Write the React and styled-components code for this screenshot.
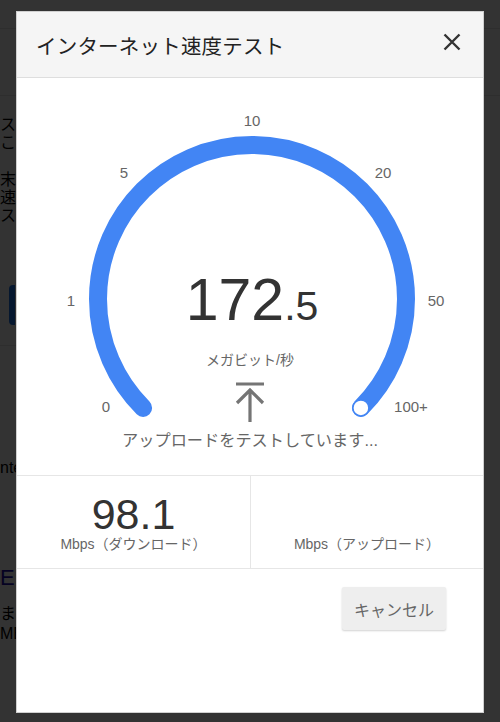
import React from 'react'
import styled, { createGlobalStyle } from 'styled-components'

const GlobalStyle = createGlobalStyle`
  html, body {
    margin: 0;
    padding: 0;
    background: #fff;
    font-family: "Liberation Sans", "Noto Sans CJK JP", Arial, sans-serif;
  }
`

const BLUE = '#4285f4'

// page behind the dialog (only a thin strip shows through)
const Page = styled.div`
  width: 500px;
  height: 722px;
  overflow: hidden;
  color: #000;
  font-size: 16px;
`

const TopBar = styled.div`
  height: 28px;
  border-bottom: 1px solid #e6e6e6;
`

const SubBar = styled.div`
  height: 66px;
  border-bottom: 1px solid #e6e6e6;
`

const Para = styled.p`
  margin: ${p => p.$top || 0}px 0 0 0;
  line-height: 18px;
  white-space: nowrap;
`

const PageButton = styled.div`
  margin: 60px 0 0 9px;
  width: 6px;
  height: 40px;
  border-radius: 4px 0 0 4px;
  background: #1a73e8;
`

const PageDivider = styled.div`
  margin-top: 20px;
  width: 16px;
  border-bottom: 1px solid #e6e6e6;
`

const PageLink = styled.div`
  margin-top: ${p => p.$top}px;
  font-size: 22px;
  color: #1a0dab;
  white-space: nowrap;
`

const Overlay = styled.div`
  position: fixed;
  inset: 0;
  background: rgba(0, 0, 0, 0.8);
  display: flex;
  justify-content: center;
  align-items: flex-start;
  padding-top: 11px;
  box-sizing: border-box;
`

const Dialog = styled.div`
  width: 468px;
  height: 702px;
  box-sizing: border-box;
  background: #fff;
  border: 1px solid #d0d0d0;
  display: flex;
  flex-direction: column;
`

const Header = styled.div`
  height: 66px;
  flex: none;
  box-sizing: border-box;
  display: flex;
  align-items: center;
  justify-content: space-between;
  padding: 0 20px 0 19px;
  background: #f5f5f5;
  border-bottom: 1px solid #dedede;
`

const Title = styled.h1`
  margin: 0;
  font-size: 20.5px;
  font-weight: 400;
  color: #222;
  letter-spacing: 0.2px;
`

const CloseButton = styled.button`
  border: 0;
  background: none;
  padding: 0;
  width: 22px;
  height: 22px;
  display: flex;
  align-items: center;
  justify-content: center;
  margin-top: -6px;
`

const Gauge = styled.div`
  position: relative;
  height: 397px;
  flex: none;
  border-bottom: 1px solid #e6e6e6;
  svg.dial {
    display: block;
  }
`

const Tick = styled.text`
  font-family: "Liberation Sans", Arial, sans-serif;
  font-size: 15px;
  fill: #666;
`

const Readout = styled.div`
  position: absolute;
  left: 0;
  right: 0;
  top: 193px;
  display: flex;
  flex-direction: column;
  align-items: center;
  color: #666;
`

const Speed = styled.div`
  font-size: 59px;
  line-height: 59px;
  color: #333;
  margin-left: 4px;
  span {
    font-size: 41px;
    line-height: 1;
  }
`

const Unit = styled.div`
  margin-top: 22px;
  font-size: 14px;
  line-height: 16px;
`

const Arrow = styled.svg`
  margin-top: 13px;
  display: block;
`

const Status = styled.div`
  margin-top: 7px;
  font-size: 16.2px;
  line-height: 20px;
`

const Stats = styled.div`
  display: grid;
  grid-template-columns: 1fr 1fr;
  height: 92px;
  flex: none;
  border-bottom: 1px solid #e6e6e6;
`

const StatCell = styled.div`
  display: flex;
  flex-direction: column;
  align-items: center;
  padding-top: 16px;
  & + & {
    border-left: 1px solid #e6e6e6;
  }
`

const StatValue = styled.div`
  height: 44px;
  font-size: 43px;
  line-height: 44px;
  color: #333;
`

const StatLabel = styled.div`
  font-size: 14px;
  line-height: 16px;
  color: #666;
`

const Footer = styled.div`
  display: flex;
  justify-content: flex-end;
  padding: 18px 37px 0 0;
`

const CancelButton = styled.button`
  width: 104px;
  height: 43px;
  border: 0;
  border-radius: 2px;
  background: #eeeeee;
  box-shadow: 0 1px 2px rgba(0, 0, 0, 0.18);
  font-family: inherit;
  font-size: 16px;
  color: #666;
`

const ticks = [
  { label: '0', x: 89, y: 328 },
  { label: '1', x: 54, y: 222 },
  { label: '5', x: 107, y: 94 },
  { label: '10', x: 235, y: 42 },
  { label: '20', x: 366, y: 94 },
  { label: '50', x: 419, y: 222 },
  { label: '100+', x: 394, y: 328 },
]

function Dial() {
  const cx = 235
  const cy = 221
  const r = 154
  const d = r * Math.SQRT1_2
  return (
    <svg className="dial" width="466" height="397" viewBox="0 0 466 397">
      <path
        d={`M ${cx - d} ${cy + d} A ${r} ${r} 0 1 1 ${cx + d} ${cy + d}`}
        fill="none"
        stroke={BLUE}
        strokeWidth="18"
        strokeLinecap="round"
      />
      <circle cx={cx + d} cy={cy + d} r="8" fill="#fff" stroke={BLUE} strokeWidth="1.5" />
      {ticks.map(t => (
        <Tick key={t.label} x={t.x} y={t.y} textAnchor="middle" dominantBaseline="central">
          {t.label}
        </Tick>
      ))}
    </svg>
  )
}

export default function App() {
  return (
    <>
      <GlobalStyle />
      <Page>
        <TopBar />
        <SubBar />
        <Para $top={20}>スピ</Para>
        <Para>こと</Para>
        <Para $top={19}>末端</Para>
        <Para>速す</Para>
        <Para>スか</Para>
        <PageButton />
        <PageDivider />
        <Para $top={113}>nte</Para>
        <PageLink $top={88}>EN</PageLink>
        <Para $top={14}>ます</Para>
        <Para $top={2}>ME</Para>
      </Page>

      <Overlay>
        <Dialog>
          <Header>
            <Title>インターネット速度テスト</Title>
            <CloseButton aria-label="閉じる">
              <svg width="18" height="18" viewBox="0 0 18 18">
                <path d="M1.5 1.5 L16.5 16.5 M16.5 1.5 L1.5 16.5" stroke="#333" strokeWidth="2.4" />
              </svg>
            </CloseButton>
          </Header>

          <Gauge>
            <Dial />
            <Readout>
              <Speed>
                172<span>.5</span>
              </Speed>
              <Unit>メガビット/秒</Unit>
              <Arrow width="30" height="42" viewBox="0 0 30 42">
                <path d="M1 3 H29 M15 9 V41 M2 22 L15 9 L28 22" fill="none" stroke="#757575" strokeWidth="3.2" />
              </Arrow>
              <Status>アップロードをテストしています...</Status>
            </Readout>
          </Gauge>

          <Stats>
            <StatCell>
              <StatValue>98.1</StatValue>
              <StatLabel>Mbps（ダウンロード）</StatLabel>
            </StatCell>
            <StatCell>
              <StatValue />
              <StatLabel>Mbps（アップロード）</StatLabel>
            </StatCell>
          </Stats>

          <Footer>
            <CancelButton>キャンセル</CancelButton>
          </Footer>
        </Dialog>
      </Overlay>
    </>
  )
}
